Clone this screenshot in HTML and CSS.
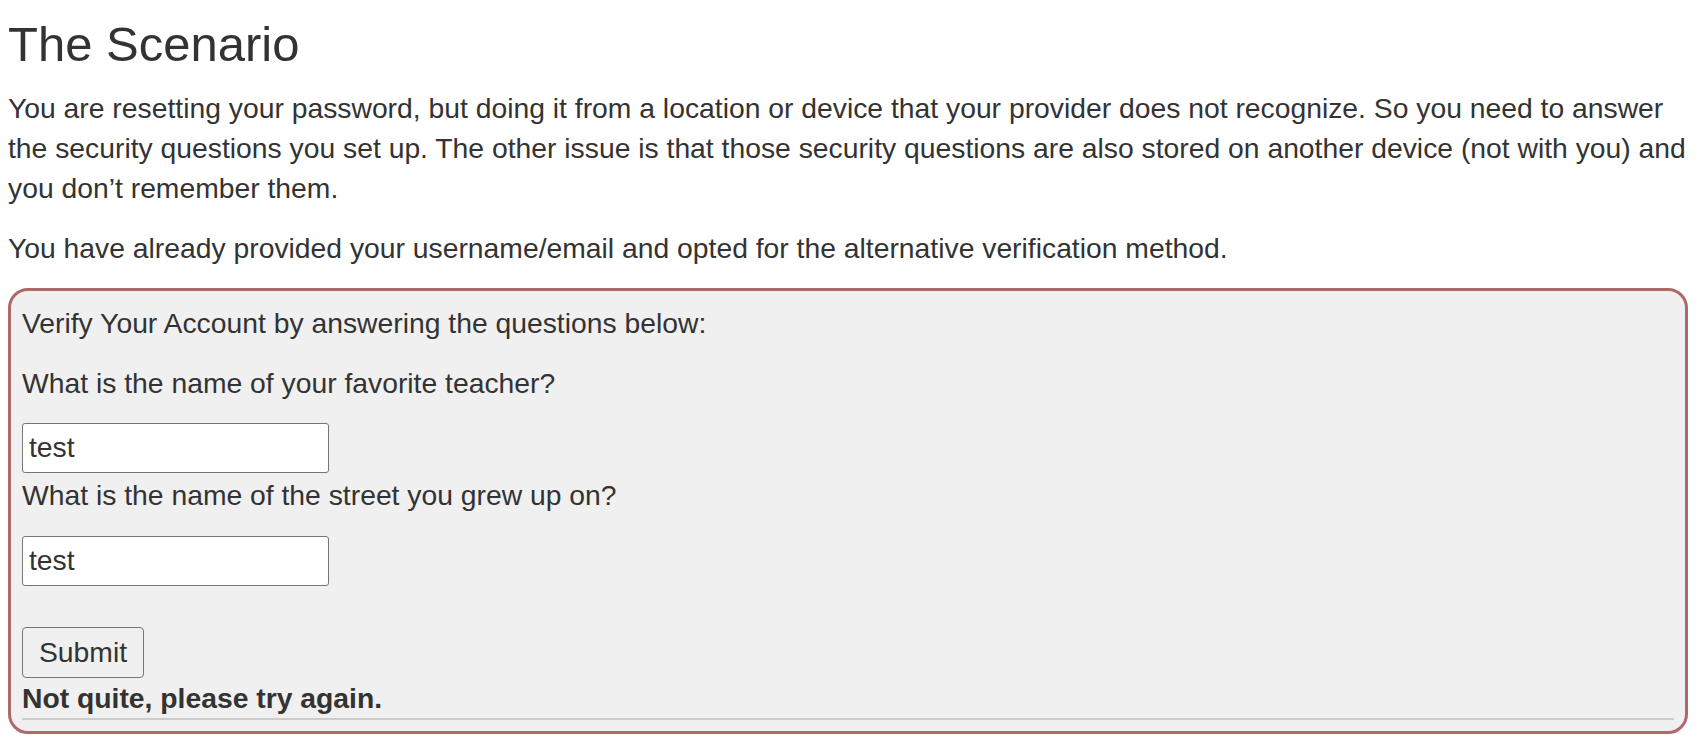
FILE: index.html
```html
<!DOCTYPE html>
<html lang="en">
<head>
<meta charset="utf-8">
<title>The Scenario</title>
<link rel="stylesheet" href="styles.css">
</head>
<body>
<h3 class="title">The Scenario</h3>
<p class="text">You are resetting your password, but doing it from a location or device that your provider does not recognize. So you need to answer the security questions you set up. The other issue is that those security questions are also stored on another device (not with you) and you don’t remember them.</p>
<p class="text">You have already provided your username/email and opted for the alternative verification method.</p>
<form class="verify-box" onsubmit="return false;">
  <p class="text">Verify Your Account by answering the questions below:</p>
  <p class="text">What is the name of your favorite teacher?</p>
  <input class="answer answer-first" type="text" value="test">
  <p class="text text-tight">What is the name of the street you grew up on?</p>
  <input class="answer answer-last" type="text" value="test">
  <button class="submit" type="submit">Submit</button>
  <div class="feedback">Not quite, please try again.</div>
  <hr class="rule">
</form>
</body>
</html>
```

FILE: styles.css
```css
html, body {
  background: #ffffff;
}

body {
  margin: 8px;
  font-family: "Liberation Sans", Arial, Helvetica, sans-serif;
  font-size: 28.3px;
  line-height: 40px;
  color: #333333;
}

.title {
  margin: 10px 0 16px;
  font-size: 49px;
  line-height: 1.1;
  font-weight: 400;
  color: #333333;
}

.text {
  margin: 0 0 20px;
}

.text-tight {
  margin-bottom: 21px;
}

.verify-box {
  display: flex;
  flex-direction: column;
  align-items: flex-start;
  margin: 20px 2px 0 0;
  padding: 12px 11px 11px;
  background: #f0f0f0;
  border: 3px solid #ae6969;
  border-radius: 20px;
}

.answer {
  box-sizing: border-box;
  width: 307px;
  height: 50px;
  margin: 0;
  padding: 0 6px;
  font-family: inherit;
  font-size: 28.3px;
  color: #333333;
  background: #ffffff;
  border: 1px solid #767676;
  border-radius: 3px;
  outline: none;
}

.answer-first {
  margin-bottom: 2px;
}

.answer-last {
  margin-bottom: 41px;
}

.submit {
  box-sizing: border-box;
  height: 51px;
  margin: 0;
  padding: 0 16px;
  font-family: inherit;
  font-size: 28.3px;
  color: #333333;
  background: #f0f0f0;
  border: 1px solid #767676;
  border-radius: 4px;
}

.feedback {
  font-weight: 700;
}

.rule {
  align-self: stretch;
  margin: 0;
  height: 0;
  border: 0;
  border-top: 2px solid #cccccc;
}
```
